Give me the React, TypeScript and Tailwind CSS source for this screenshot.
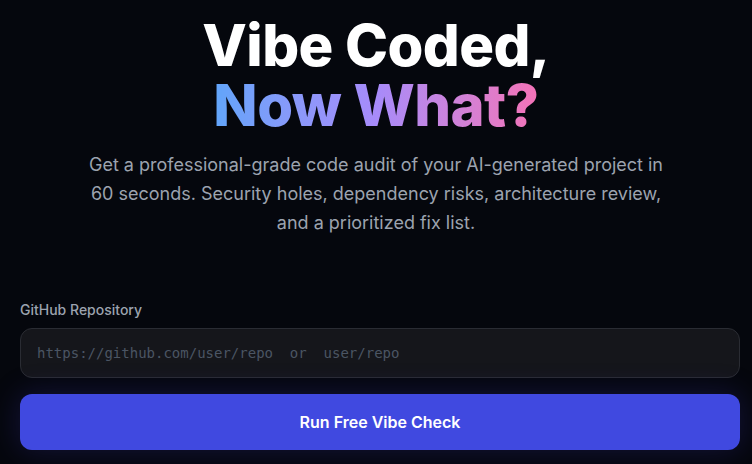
export default function App() {
  return (
    <div className="w-[752px] h-[464px] overflow-hidden bg-[#05070d] font-['Inter',sans-serif]">
      <div className="flex flex-col items-center pt-[15px]">
        <h1 className="text-[58px] font-extrabold leading-[60px] tracking-[-0.01em] text-center">
          <span className="text-white">Vibe Coded,</span>
          <br />
          <span className="bg-gradient-to-r from-[#60a5fa] via-[#a78bfa] to-[#f472b6] bg-clip-text text-transparent">
            Now What?
          </span>
        </h1>
        <p className="mt-[15px] w-[600px] text-center text-[18px] leading-[29px] text-[#9ca3af]">
          Get a professional-grade code audit of your AI-generated project in 60 seconds. Security holes, dependency risks, architecture review, and a prioritized fix list.
        </p>
      </div>
      <div className="ml-[20px] w-[720px] mt-[63px]">
        <label className="block text-[14px] font-medium text-[#9ca3af] leading-[20px]">GitHub Repository</label>
        <div className="mt-[8px] h-[50px] rounded-xl border border-[#2a2c33] bg-[#15161b] flex items-center px-4">
          <span className="font-['DejaVu_Sans_Mono',monospace] text-[14px] text-[#4b5563] whitespace-pre">
            https://github.com/user/repo  or  user/repo
          </span>
        </div>
        <button className="mt-[16px] w-full h-[56px] rounded-xl bg-[#4049e0] text-white text-[16px] font-semibold shadow-[0_0_30px_rgba(67,56,202,0.25)]">
          Run Free Vibe Check
        </button>
      </div>
    </div>
  );
}
